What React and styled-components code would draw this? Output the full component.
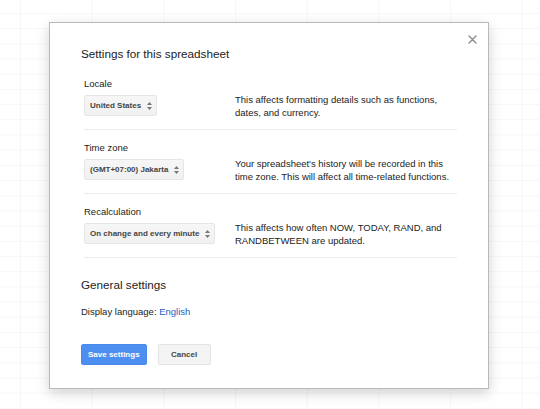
import styled, { createGlobalStyle } from "styled-components";

const GlobalStyle = createGlobalStyle`
  body {
    margin: 0;
    font-family: "Liberation Sans", Arial, sans-serif;
    color: #222;
  }
`;

const sections = [
  {
    label: "Locale",
    value: "United States",
    text: "This affects formatting details such as functions, dates, and currency.",
  },
  {
    label: "Time zone",
    value: "(GMT+07:00) Jakarta",
    text: "Your spreadsheet's history will be recorded in this time zone. This will affect all time-related functions.",
  },
  {
    label: "Recalculation",
    value: "On change and every minute",
    text: "This affects how often NOW, TODAY, RAND, and RANDBETWEEN are updated.",
  },
];

function SortArrows() {
  return (
    <svg width="5" height="8" viewBox="0 0 5 8">
      <path d="M2.5 0 L5 3 L0 3 Z M0 5 L5 5 L2.5 8 Z" fill="#777" />
    </svg>
  );
}

function CloseIcon() {
  return (
    <svg width="9" height="9" viewBox="0 0 9 9">
      <path
        d="M1 1 L8 8 M8 1 L1 8"
        stroke="#8a8a8a"
        strokeWidth="1.4"
        strokeLinecap="round"
      />
    </svg>
  );
}

export default function App() {
  return (
    <STPage>
      <GlobalStyle />
      <STDialog>
        <STClose>
          <CloseIcon />
        </STClose>
        <STTitle>Settings for this spreadsheet</STTitle>

        {sections.map((s) => (
          <STSection key={s.label}>
            <STLabel>{s.label}</STLabel>
            <STRow>
              <STSelect>
                <span>{s.value}</span>
                <SortArrows />
              </STSelect>
              <STDescription>{s.text}</STDescription>
            </STRow>
          </STSection>
        ))}

        <STSubTitle>General settings</STSubTitle>
        <STLanguage>
          Display language: <STLink>English</STLink>
        </STLanguage>

        <STButtons>
          <STButton $primary>Save settings</STButton>
          <STButton>Cancel</STButton>
        </STButtons>
      </STDialog>
    </STPage>
  );
}

const STPage = styled.div`
  width: 540px;
  height: 409px;
  overflow: hidden;
  padding-top: 22px;
  box-sizing: border-box;
  background-color: #fff;
  background-image: linear-gradient(to right, #f6f6f6 1px, transparent 1px),
    linear-gradient(to bottom, #f7f7f7 1px, transparent 1px);
  background-size: 71.7px 100%, 100% 15.2px;
  background-position: 20px 0, 0 13px;
`;

const STDialog = styled.div`
  position: relative;
  width: 440px;
  margin-left: 49px;
  box-sizing: border-box;
  padding: 24px 31px 23px 31px;
  background: #fff;
  border: 1px solid #b9b9b9;
  box-shadow: 0 4px 12px rgba(0, 0, 0, 0.18);
`;

const STClose = styled.div`
  position: absolute;
  top: 12px;
  right: 11px;
  width: 9px;
  height: 9px;
  display: flex;
`;

const STTitle = styled.div`
  font-size: 11.7px;
  line-height: 14px;
  color: #222;
  margin-bottom: 5px;
`;

const STSection = styled.div`
  margin-left: 3px;
  padding: 12px 0 13px;
  border-bottom: 1px solid #ebebeb;

  &:first-of-type {
    padding-top: 11px;
  }
`;

const STLabel = styled.div`
  font-size: 9.5px;
  line-height: 12px;
  color: #222;
  margin-bottom: 5px;
`;

const STRow = styled.div`
  display: grid;
  grid-template-columns: 151px 1fr;
  align-items: start;
`;

const STSelect = styled.div`
  justify-self: start;
  display: flex;
  align-items: center;
  gap: 6px;
  height: 21px;
  box-sizing: border-box;
  padding: 0 4px 0 5px;
  background: linear-gradient(#f6f6f6, #f1f1f1);
  border: 1px solid #e6e6e6;
  border-radius: 2px;
  font-size: 8px;
  font-weight: bold;
  color: #444;
  white-space: nowrap;
`;

const STDescription = styled.div`
  font-size: 9.5px;
  line-height: 13px;
  color: #222;
  margin: -2px 0 -3px;
`;

const STSubTitle = styled.div`
  font-size: 11.7px;
  line-height: 14px;
  color: #222;
  margin-top: 20px;
`;

const STLanguage = styled.div`
  font-size: 9.5px;
  line-height: 12px;
  color: #222;
  margin-top: 14px;
`;

const STLink = styled.span`
  color: #1a5fc4;
`;

const STButtons = styled.div`
  display: flex;
  gap: 11px;
  margin-top: 26px;
`;

const STButton = styled.button`
  height: 21px;
  min-width: 53px;
  padding: 0 6px;
  box-sizing: border-box;
  font-family: "Liberation Sans", Arial, sans-serif;
  font-size: 8px;
  font-weight: bold;
  border-radius: 2px;
  color: ${(p) => (p.$primary ? "#fff" : "#444")};
  background: ${(p) => (p.$primary ? "#4d8ff0" : "#f4f4f4")};
  border: 1px solid ${(p) => (p.$primary ? "#4a89ea" : "#e4e4e4")};
`;
